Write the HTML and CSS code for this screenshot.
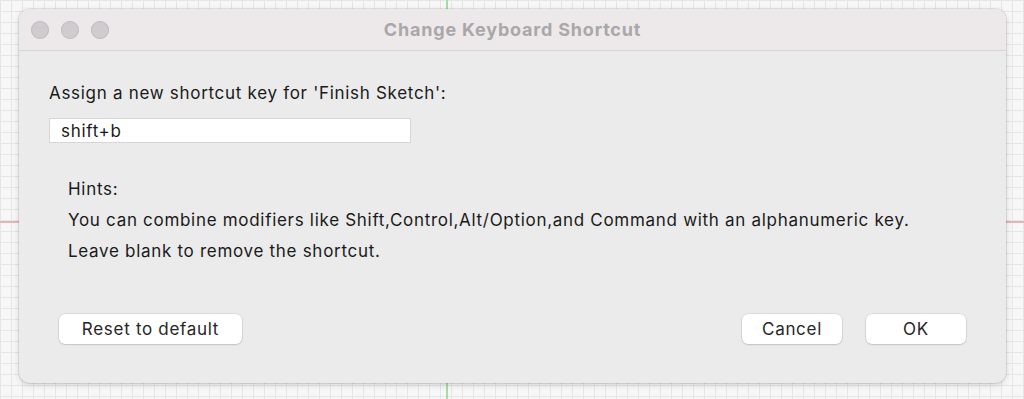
FILE: index.html
```html
<!DOCTYPE html>
<html lang="en">
<head>
    <meta charset="UTF-8">
    <title>Change Keyboard Shortcut</title>
    <link rel="stylesheet" href="styles.css">
</head>
<body>
    <div class="dialog">
        <div class="titlebar">
            <div class="lights">
                <span class="light"></span>
                <span class="light"></span>
                <span class="light"></span>
            </div>
            <div class="title">Change Keyboard Shortcut</div>
        </div>
        <div class="content">
            <label class="prompt" for="shortcut">Assign a new shortcut key for 'Finish Sketch':</label>
            <input class="shortcut" id="shortcut" type="text" value="shift+b">
            <div class="hints">
                <p>Hints:</p>
                <p>You can combine modifiers like Shift,Control,Alt/Option,and Command with an alphanumeric key.</p>
                <p>Leave blank to remove the shortcut.</p>
            </div>
            <div class="actions">
                <button class="btn reset">Reset to default</button>
                <div class="right">
                    <button class="btn">Cancel</button>
                    <button class="btn">OK</button>
                </div>
            </div>
        </div>
    </div>
</body>
</html>
```

FILE: styles.css
```css
html, body {
    height: 100%;
}
body {
    margin: 0;
    padding: 9px 18px 0 19px;
    box-sizing: border-box;
    font-family: Inter, "Liberation Sans", sans-serif;
    background-color: #f7f7f7;
    background-image:
        linear-gradient(to bottom, transparent 221px, #e3b5b9 221px, #e3b5b9 223px, transparent 223px),
        linear-gradient(to right, transparent 446px, #a6dca6 446px, #a6dca6 448px, transparent 448px),
        linear-gradient(to right, #e6e6e6 1px, transparent 1px),
        linear-gradient(to bottom, #e6e6e6 1px, transparent 1px);
    background-size: 100% 100%, 100% 100%, 11px 11px, 11px 11px;
    overflow: hidden;
}
.dialog {
    width: 987px;
    height: 374px;
    background: #ebebeb;
    border-radius: 11px;
    box-shadow: 0 0 0 1px rgba(0, 0, 0, 0.08), 0 2px 6px rgba(0, 0, 0, 0.15);
    display: flex;
    flex-direction: column;
    overflow: hidden;
}
.titlebar {
    height: 41px;
    background: #ede9eb;
    border-bottom: 1px solid #d9d5d7;
    display: flex;
    align-items: center;
    position: relative;
}
.lights {
    display: flex;
    gap: 12px;
    padding-left: 12px;
}
.light {
    width: 18px;
    height: 18px;
    border-radius: 50%;
    background: #cfcbce;
    box-shadow: inset 0 0 0 1px #c2bec1;
}
.title {
    position: absolute;
    left: 0;
    right: 0;
    text-align: center;
    font-size: 18px;
    font-weight: 700;
    letter-spacing: 0.8px;
    color: #aaa7a9;
}
.content {
    flex: 1;
    padding: 32px 30px 0 30px;
    display: flex;
    flex-direction: column;
    color: #1a1a1a;
    font-size: 17px;
    letter-spacing: 0.7px;
}
.prompt {
    line-height: 20px;
}
.shortcut {
    width: 362px;
    height: 25px;
    margin-top: 15px;
    padding: 0 11px;
    box-sizing: border-box;
    border: 1px solid #d6d6d6;
    background: #fff;
    font-family: inherit;
    font-size: 17px;
    letter-spacing: 0.7px;
    color: #1a1a1a;
    outline: none;
}
.hints {
    padding: 31px 0 0 19px;
}
.hints p {
    margin: 0;
    line-height: 31px;
}
.actions {
    margin-top: 47px;
    padding: 0 10px;
    display: flex;
    justify-content: space-between;
}
.right {
    display: flex;
    gap: 24px;
}
.btn {
    height: 30px;
    width: 100px;
    border: none;
    border-radius: 6px;
    background: #fff;
    box-shadow: 0 0 0 0.5px rgba(0, 0, 0, 0.12), 0 1px 2px rgba(0, 0, 0, 0.12);
    font-family: inherit;
    font-size: 17px;
    letter-spacing: 0.7px;
    color: #262626;
}
.btn.reset {
    width: 183px;
}
```
